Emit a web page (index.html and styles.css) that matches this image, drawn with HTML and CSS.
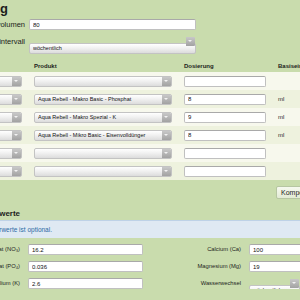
FILE: index.html
```html
<!DOCTYPE html>
<html lang="de">
<head>
  <meta charset="UTF-8" />
  <title>Düngung</title>
  <link rel="stylesheet" href="styles.css">
</head>
<body>
  <div class="page">
    <h2 class="title">Düngung</h2>
    <div class="form-top">
      <label>Beckenvolumen</label>
      <input class="field" type="text" value="80">
      <label>Dosierintervall</label>
      <div class="sel"><select><option>wöchentlich</option></select></div>
    </div>

    <div class="plan">
      <div class="thead">
        <span>Tag</span><span>Produkt</span><span>Dosierung</span><span>Basiseinheit</span>
      </div>
      <div class="trow">
        <div class="sel"><select><option>Montag</option></select></div>
        <div class="sel"><select><option></option></select></div>
        <input class="field" type="text" value="">
        <span></span>
      </div>
      <div class="trow">
        <div class="sel"><select><option>Montag</option></select></div>
        <div class="sel"><select><option>Aqua Rebell - Makro Basic - Phosphat</option></select></div>
        <input class="field" type="text" value="8">
        <span>ml</span>
      </div>
      <div class="trow">
        <div class="sel"><select><option>Montag</option></select></div>
        <div class="sel"><select><option>Aqua Rebell - Makro Spezial - K</option></select></div>
        <input class="field" type="text" value="9">
        <span>ml</span>
      </div>
      <div class="trow">
        <div class="sel"><select><option>Montag</option></select></div>
        <div class="sel"><select><option>Aqua Rebell - Mikro Basic - Eisenvolldünger</option></select></div>
        <input class="field" type="text" value="8">
        <span>ml</span>
      </div>
      <div class="trow">
        <div class="sel"><select><option></option></select></div>
        <div class="sel"><select><option></option></select></div>
        <input class="field" type="text" value="">
        <span></span>
      </div>
      <div class="trow">
        <div class="sel"><select><option></option></select></div>
        <div class="sel"><select><option></option></select></div>
        <input class="field" type="text" value="">
        <span></span>
      </div>
    </div>

    <div class="actions">
      <button>Komponente hinzufügen</button>
    </div>

    <h3 class="subtitle">Wasserwerte</h3>
    <div class="info">Die Angabe der Wasserwerte ist optional.</div>

    <div class="values">
      <label>Nitrat (NO₃)</label>
      <input class="field" type="text" value="16.2">
      <label>Calcium (Ca)</label>
      <input class="field" type="text" value="100">

      <label>Phosphat (PO₄)</label>
      <input class="field" type="text" value="0.036">
      <label>Magnesium (Mg)</label>
      <input class="field" type="text" value="19">

      <label>Kalium (K)</label>
      <input class="field" type="text" value="2.6">
      <label>Wasserwechsel</label>
      <div class="sel short"><select><option>wöchentlich</option></select></div>
    </div>
  </div>
</body>
</html>
```

FILE: styles.css
```css
body {
  margin: 0;
  background-color: #c9dcad;
  font-family: "Liberation Sans", Arial, sans-serif;
  color: #1c1c1c;
  overflow: hidden;
}
/* the screenshot shows a crop of a wider page */
.page {
  margin-left: -70px;
  width: 520px;
}
.title {
  margin: 0;
  padding-left: 21px;
  font-size: 13px;
  line-height: 18px;
}
.form-top {
  display: grid;
  grid-template-columns: 95px 167px;
  grid-auto-rows: 11px;
  column-gap: 4px;
  row-gap: 6px;
  margin-top: 1px;
  align-items: center;
}
.form-top label {
  text-align: right;
  font-size: 7.5px;
  line-height: 11px;
}
.field {
  box-sizing: border-box;
  height: 11px;
  margin: 0;
  padding: 0 3px;
  border: 1px solid #c0c0c0;
  border-top-color: #a9a9a9;
  border-radius: 2px;
  background: #fff;
  font-family: "Liberation Sans", Arial, sans-serif;
  font-size: 6px;
  color: #111;
}
.sel {
  position: relative;
  height: 11px;
}
.sel.short {
  width: 51px;
}
.sel select {
  appearance: none;
  -webkit-appearance: none;
  box-sizing: border-box;
  width: 100%;
  height: 11px;
  margin: 0;
  padding: 0 12px 0 3px;
  border: 1px solid #c3c3c3;
  border-radius: 2px;
  background: linear-gradient(#ffffff, #f1f1f1 45%, #dcdcdc);
  font-family: "Liberation Sans", Arial, sans-serif;
  font-size: 5.5px;
  color: #111;
}
.sel::after {
  content: "";
  position: absolute;
  top: 1px;
  right: 1px;
  width: 9px;
  height: 9px;
  background: linear-gradient(#c8c8c8, #a2a2a2);
  border-radius: 0 1px 1px 0;
}
.sel::before {
  content: "";
  position: absolute;
  top: 4px;
  right: 4px;
  z-index: 1;
  border-left: 2px solid transparent;
  border-right: 2px solid transparent;
  border-top: 2px solid #f2f2f2;
}
.plan {
  margin-top: 13px;
}
.thead, .trow {
  display: grid;
  grid-template-columns: 72px 138px 82px auto;
  column-gap: 12px;
  padding-left: 20px;
  align-items: center;
}
.thead {
  height: 12px;
  font-size: 6px;
  font-weight: bold;
}
.thead span:first-child {
  visibility: hidden;
}
.trow {
  height: 18px;
  background-color: #f7f8ed;
  font-size: 6px;
}
.trow:nth-child(odd) {
  background-color: #eef2de;
}
.actions {
  display: flex;
  margin-top: 6px;
  padding-left: 346px;
}
.actions button {
  height: 13px;
  padding: 0 4px;
  border: 1px solid #b6c6a2;
  border-radius: 2px;
  background: linear-gradient(#f6f9ef, #e3ebd5);
  font-family: "Liberation Sans", Arial, sans-serif;
  font-size: 7px;
  line-height: 11px;
  color: #222;
}
.subtitle {
  margin: 10px 0 0;
  padding-left: 41px;
  font-size: 8px;
  line-height: 10px;
}
.info {
  margin-top: 1px;
  height: 17px;
  padding-left: 3px;
  border-top: 1px solid #bed2e7;
  background-color: #dfe9f3;
  color: #2e69a4;
  font-size: 6.5px;
  line-height: 17px;
}
.values {
  display: grid;
  grid-template-columns: 90px 115px 90px 115px;
  grid-auto-rows: 11px;
  column-gap: 8px;
  row-gap: 6px;
  margin-top: 6px;
  align-items: center;
}
.values label {
  text-align: right;
  font-size: 5.8px;
  line-height: 11px;
}
```
